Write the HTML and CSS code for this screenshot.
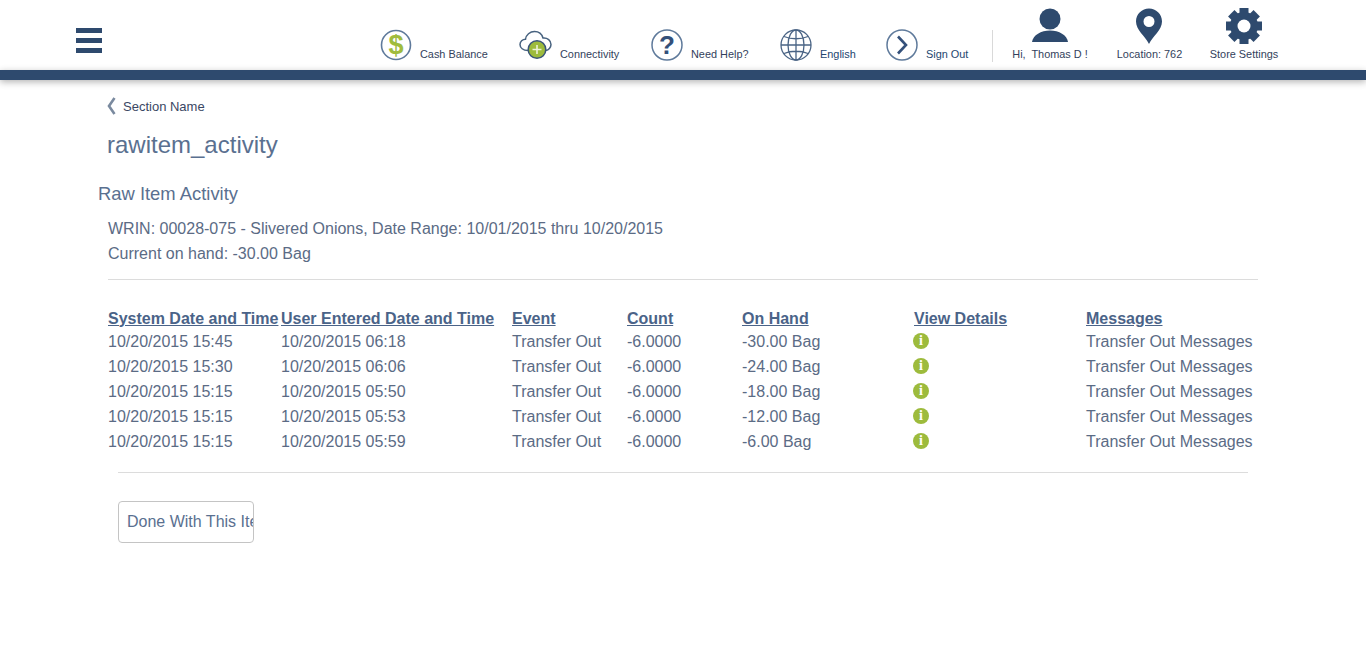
FILE: index.html
```html
<!DOCTYPE html>
<html lang="en">
<head>
    <meta charset="UTF-8">
    <meta name="viewport" content="width=device-width, initial-scale=1.0">
    <title>Raw Item Activity</title>
    <link rel="stylesheet" href="styles.css">
</head>
<body>
    <!-- Top header -->
    <header class="header">
        <div class="hamburger"><span></span><span></span><span></span></div>
        <nav class="nav">
            <a class="nav-item nav-cash">
                <svg width="32" height="32" viewBox="0 0 32 32"><circle cx="16" cy="16" r="14.5" fill="#fff" stroke="#5f7a9b" stroke-width="1.6"/><text x="16" y="25" text-anchor="middle" class="dollar">$</text></svg>
                <span class="nav-label">Cash Balance</span>
            </a>
            <a class="nav-item nav-conn">
                <svg width="33" height="32" viewBox="0 0 33 32"><path d="M9 21.500C4 21.500 1 18.800 1 15.500c0-3 2.500-5.300 5.500-5.300C7 6 11 2.500 15.500 2.500c4.500 0 7.500 3 8.500 6.500 4.500-.5 8 2.500 8 6.500 0 3-2.500 5.500-5 6" fill="#fff" stroke="#47627f" stroke-width="1.500"/><circle cx="18" cy="20.500" r="8.800" fill="#9dbb3c" stroke="#3a5578" stroke-width="1.500"/><path d="M18 16v9M13.500 20.500h9" stroke="#eef3d8" stroke-width="1.600"/></svg>
                <span class="nav-label">Connectivity</span>
            </a>
            <a class="nav-item nav-help">
                <svg width="32" height="32" viewBox="0 0 32 32"><circle cx="16" cy="16" r="15" fill="#fff" stroke="#5f7a9b" stroke-width="1.500"/><text x="16" y="25" text-anchor="middle" class="qmark">?</text></svg>
                <span class="nav-label">Need Help?</span>
            </a>
            <a class="nav-item nav-lang">
                <svg width="32" height="32" viewBox="0 0 32 32" fill="none" stroke="#4a6485" stroke-width="1.300"><circle cx="16" cy="16" r="15"/><ellipse cx="16" cy="16" rx="8" ry="15"/><path d="M16 1v30M1 16h30M4 7.500c7 3 17 3 24 0M4 24.500c7-3 17-3 24 0"/></svg>
                <span class="nav-label label-blue">English</span>
            </a>
            <a class="nav-item nav-out">
                <svg width="32" height="32" viewBox="0 0 32 32" fill="none"><circle cx="16" cy="16" r="15" stroke="#5f7a9b" stroke-width="1.500"/><path d="M12 7.500 20 16l-8 8.500" stroke="#34507a" stroke-width="2.600"/></svg>
                <span class="nav-label label-blue">Sign Out</span>
            </a>
            <div class="divider"></div>
            <a class="nav-stack stack-user">
                <svg width="38" height="36" viewBox="0 0 38 36"><circle cx="19" cy="11" r="10.500" fill="#2e4a6e"/><path d="M1 34c1-7 9-11.500 18-11.500S36 27 37 34z" fill="#2e4a6e"/></svg>
                <span class="nav-label">Hi,&nbsp; Thomas D !</span>
            </a>
            <a class="nav-stack stack-loc">
                <svg class="pin" width="28" height="36" viewBox="0 0 28 36"><path fill-rule="evenodd" d="M14 36C10 28 1 22 1 13.500 1 6 7 .5 14 .5S27 6 27 13.500C27 22 18 28 14 36zM14 8a5.500 5.500 0 1 0 0 11 5.500 5.500 0 0 0 0-11z" fill="#2e4a6e"/></svg>
                <span class="nav-label">Location: 762</span>
            </a>
            <a class="nav-stack stack-gear">
                <svg width="36" height="36" viewBox="0 0 36 36" fill="#2e4a6e"><circle cx="18" cy="18" r="14"/><rect x="13.500" width="9" height="36"/><rect x="13.500" width="9" height="36" transform="rotate(45 18 18)"/><rect x="13.500" width="9" height="36" transform="rotate(90 18 18)"/><rect x="13.500" width="9" height="36" transform="rotate(135 18 18)"/><circle cx="18" cy="18" r="6.500" fill="#fff"/></svg>
                <span class="nav-label">Store Settings</span>
            </a>
        </nav>
    </header>
    <div class="header-bar"></div>

    <main class="content">
        <div class="breadcrumb">
            <svg width="9" height="18" viewBox="0 0 9 18" fill="none"><path d="M7.500 1 2 9l5.500 8" stroke="#7a8a9f" stroke-width="2.600"/></svg>
            <span>Section Name</span>
        </div>
        <h1 class="page-title">rawitem_activity</h1>
        <h2 class="section-title">Raw Item Activity</h2>
        <div class="summary">
            <div>WRIN: 00028-075 - Slivered Onions, Date Range: 10/01/2015 thru 10/20/2015</div>
            <div>Current on hand: -30.00 Bag</div>
        </div>
        <hr class="rule rule-top">

        <table class="activity">
            <thead>
                <tr>
                    <th class="col-system">System Date and Time</th>
                    <th class="col-user">User Entered Date and Time</th>
                    <th class="col-event">Event</th>
                    <th class="col-count">Count</th>
                    <th class="col-hand">On Hand</th>
                    <th class="col-view">View Details</th>
                    <th>Messages</th>
                </tr>
            </thead>
            <tbody>
                <tr>
                    <td>10/20/2015 15:45</td><td>10/20/2015 06:18</td><td>Transfer Out</td><td>-6.0000</td><td>-30.00 Bag</td>
                    <td><span class="info">i</span></td><td>Transfer Out Messages</td>
                </tr>
                <tr>
                    <td>10/20/2015 15:30</td><td>10/20/2015 06:06</td><td>Transfer Out</td><td>-6.0000</td><td>-24.00 Bag</td>
                    <td><span class="info">i</span></td><td>Transfer Out Messages</td>
                </tr>
                <tr>
                    <td>10/20/2015 15:15</td><td>10/20/2015 05:50</td><td>Transfer Out</td><td>-6.0000</td><td>-18.00 Bag</td>
                    <td><span class="info">i</span></td><td>Transfer Out Messages</td>
                </tr>
                <tr>
                    <td>10/20/2015 15:15</td><td>10/20/2015 05:53</td><td>Transfer Out</td><td>-6.0000</td><td>-12.00 Bag</td>
                    <td><span class="info">i</span></td><td>Transfer Out Messages</td>
                </tr>
                <tr>
                    <td>10/20/2015 15:15</td><td>10/20/2015 05:59</td><td>Transfer Out</td><td>-6.0000</td><td>-6.00 Bag</td>
                    <td><span class="info">i</span></td><td>Transfer Out Messages</td>
                </tr>
            </tbody>
        </table>

        <hr class="rule rule-bottom">
        <button type="button" class="done-btn">Done With This Item</button>
    </main>
</body>
</html>
```

FILE: styles.css
```css
* {
    box-sizing: border-box;
}
body {
    font-family: "Liberation Sans", Arial, sans-serif;
    margin: 0;
    background: #fff;
    color: #5b6b85;
    font-size: 16px;
}

/* header */
.header {
    display: flex;
    height: 70px;
    padding-left: 76px;
}
.hamburger {
    width: 26px;
    margin-top: 28px;
}
.hamburger span {
    display: block;
    height: 5px;
    margin-bottom: 5px;
    background: #2e4a6e;
}
.nav {
    display: flex;
    margin-left: 278px;
    align-items: flex-start;
}
.nav-item {
    display: flex;
    align-items: flex-end;
    margin-top: 29px;
    height: 32px;
}
.nav-label {
    font-size: 10.9px;
    line-height: 12px;
    color: #333f5c;
    white-space: nowrap;
}
.label-blue {
    color: #24466f;
}
.nav-item .nav-label {
    margin-left: 8px;
    margin-bottom: 1px;
}
.nav-cash { width: 139px; }
.nav-conn { width: 132px; }
.nav-help { width: 129px; }
.nav-lang { width: 106px; }
.nav-out { width: 106px; }
.dollar {
    font-family: "Liberation Sans", Arial, sans-serif;
    font-size: 27px;
    font-weight: bold;
    fill: #a0bc3d;
}
.qmark {
    font-family: "Liberation Sans", Arial, sans-serif;
    font-size: 26px;
    font-weight: bold;
    fill: #34507a;
}
.divider {
    width: 1px;
    height: 32px;
    margin-top: 30px;
    background: #d9d9d9;
}
.nav-stack {
    display: flex;
    flex-direction: column;
    align-items: center;
    padding-top: 8px;
}
.nav-stack .nav-label {
    margin-top: 4px;
}
.pin {
    margin-right: 1px;
}
.stack-user { width: 114px; }
.stack-loc { width: 85px; }
.stack-gear { width: 104px; }
.header-bar {
    height: 10px;
    background: #2e4a6e;
    box-shadow: 0 2px 7px rgba(0, 0, 0, 0.3);
}

/* content */
.content {
    padding: 16px 108px 0 108px;
}
.breadcrumb {
    display: flex;
    align-items: center;
    gap: 7px;
    height: 20px;
    margin-left: -1px;
    font-size: 13px;
    color: #3a4763;
}
.page-title {
    margin: 14px 0 0 -1px;
    font-size: 24px;
    line-height: 30px;
    font-weight: normal;
    color: #5a7090;
}
.section-title {
    margin: 22px 0 0 -10px;
    font-size: 18.4px;
    line-height: 24px;
    font-weight: normal;
    color: #5a7090;
}
.summary {
    margin-top: 10px;
    line-height: 25px;
}
.rule {
    border: 0;
    border-top: 1px solid #dcdcdc;
    margin: 0;
}
.rule-top {
    margin-top: 13px;
}
.rule-bottom {
    margin: 18px 10px 0;
}
.activity {
    margin-top: 28px;
    border-collapse: collapse;
    table-layout: fixed;
    width: 1150px;
}
.activity th {
    text-align: left;
    padding: 0;
    height: 21px;
    color: #4a6388;
    text-decoration: underline;
    white-space: nowrap;
}
.activity td {
    padding: 0;
    height: 25px;
    white-space: nowrap;
}
.col-system { width: 173px; }
.col-user { width: 231px; }
.col-event { width: 115px; }
.col-count { width: 115px; }
.col-hand { width: 172px; }
.col-view { width: 172px; }
.info {
    display: block;
    width: 16px;
    height: 16px;
    margin: 0 0 1px -1px;
    border-radius: 50%;
    background: #9dbb3c;
    color: #fff;
    font-family: "Liberation Serif", serif;
    font-weight: bold;
    font-size: 14px;
    line-height: 16px;
    text-align: center;
}
.done-btn {
    display: block;
    width: 136px;
    height: 42px;
    margin: 28px 0 0 10px;
    padding: 0 8px;
    overflow: hidden;
    white-space: nowrap;
    text-align: left;
    font-family: inherit;
    font-size: 16px;
    color: #5a7090;
    background: #fff;
    border: 1px solid #c4c4c4;
    border-radius: 4px;
}
```
